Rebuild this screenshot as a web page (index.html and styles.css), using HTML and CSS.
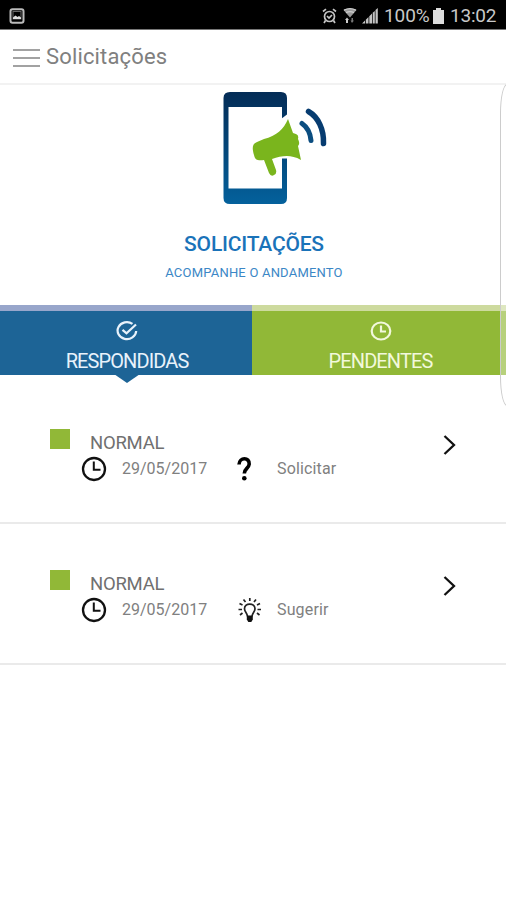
FILE: index.html
```html
<!DOCTYPE html>
<html lang="pt-BR">
<head>
  <meta charset="UTF-8">
  <title>Solicitações</title>
  <link rel="stylesheet" href="styles.css">
</head>
<body>

  <div class="status-bar">
    <svg class="status-picture" width="16" height="16" viewBox="0 0 16 16">
      <rect x="1.5" y="1.2" width="13" height="13.6" rx="2" fill="none" stroke="#bbb" stroke-width="2"/>
      <rect x="4" y="3.5" width="8" height="7.5" fill="none" stroke="#666" stroke-width="1"/>
      <path d="M4 11V9.500l2.500-2 2 1.500 1.500-1 2 1.500V11z" fill="#ddd"/>
    </svg>
    <div class="status-right">
      <svg width="15" height="16" viewBox="0 0 15 16" fill="none" stroke="#c4c4c4" stroke-width="1.700">
        <circle cx="7.500" cy="8.500" r="5"/>
        <path d="M1 3.500L4 1.200M14 3.500L11 1.200M3.500 12.500L2 15M11.500 12.500L13 15M5 8l2 2 3-3"/>
      </svg>
      <svg class="wifi" width="14" height="16" viewBox="0 0 14 16">
        <path d="M0.500 2Q7-1.500 13.500 2L7 9.500z" fill="#999"/>
        <path d="M1 2.200Q7-.8 13 2.200M3 4.700Q7 2.700 11 4.700" fill="none" stroke="#ccc" stroke-width="1.300"/>
        <path d="M4 9.500L6 12H5v3H3v-3H2z" fill="#ccc"/>
        <path d="M9 15L7.500 12.500h1V10h1.500v2.500h1z" fill="#777"/>
      </svg>
      <svg class="signal" width="16" height="16" viewBox="0 0 16 16" fill="#c4c4c4">
        <path d="M0 15.500L3 12.500V15.500zM3.800 11.700L6.500 9V15.500H3.800zM7.300 8.200L10 5.500V15.500H7.300zM10.700 4.800L12.800 3V15.500H10.700zM13.500 2L15.800 0V15.500H13.500z"/>
      </svg>
      <span class="percent">100%</span>
      <svg class="battery" width="11" height="16" viewBox="0 0 11 16" fill="#ddd">
        <path d="M3 0h5v2h3v14H0V2h3z"/>
      </svg>
      <span class="time">13:02</span>
    </div>
  </div>

  <header class="top-bar">
    <div class="menu"><i></i><i></i><i></i></div>
    <span class="top-title">Solicitações</span>
  </header>

  <section class="hero">
    <svg width="106" height="116" viewBox="0 0 106 116">
      <defs>
        <linearGradient id="phone" x1="0" y1="0" x2="0" y2="1">
          <stop offset="0" stop-color="#042c56"/>
          <stop offset="1" stop-color="#04619c"/>
        </linearGradient>
      </defs>
      <path fill="url(#phone)" fill-rule="evenodd" d="M7 2H58Q64 2 64 8V108Q64 114 58 114H7Q0.500 114 0.500 108V8Q0.500 2 7 2zM5.500 17V98.500H59V17z"/>
      <path d="M58 29L66 23V68.500H58z" fill="#fff"/>
      <path fill="#7ab51d" d="M65 29C61 39 53 46 41 49L34 52C29 54 29 58 31 65C32 70 35 71 41 70L46 83Q48 87 51 85Q54 84 53 80L49 69C59 66 67 64 78 70L75 56C77 54 76 51 75 49C76 45 74 44 70 43z"/>
      <path d="M79 33.500Q87 39 88 50.500" fill="none" stroke="#0b4d80" stroke-width="5" stroke-linecap="round"/>
      <path d="M85.500 21.500C95 27 101 39 100.500 53.500" fill="none" stroke="#073c70" stroke-width="5.500" stroke-linecap="round"/>
    </svg>
    <h1>SOLICITAÇÕES</h1>
    <p>ACOMPANHE O ANDAMENTO</p>
  </section>

  <nav class="tabs">
    <a class="tab answered">
      <svg width="22" height="22" viewBox="0 0 22 22" fill="none" stroke="#e8f2fb" stroke-width="2.200">
        <path d="M16.500 3.800A9.300 8.500 0 1 0 20.200 11M6.500 9.800l4 3.500L20 4.500"/>
      </svg>
      <span>RESPONDIDAS</span>
    </a>
    <a class="tab pending">
      <svg width="22" height="22" viewBox="0 0 22 22" fill="none" stroke="#f2f8dc" stroke-width="2.200">
        <ellipse cx="11" cy="11" rx="9.300" ry="8.500"/>
        <path d="M11 5.500V11.500H16"/>
      </svg>
      <span>PENDENTES</span>
    </a>
  </nav>

  <main class="requests">
    <article class="request">
      <div class="flag"></div>
      <div class="info">
        <h2>NORMAL</h2>
        <div class="meta">
          <svg class="clock" width="26" height="26" viewBox="0 0 26 26" fill="none" stroke="#111">
            <circle cx="13" cy="13" r="11" stroke-width="2.300"/>
            <path d="M12.800 5.500V13.800H19.500" stroke-width="2"/>
          </svg>
          <span class="date">29/05/2017</span>
          <svg class="kind" width="26" height="26" viewBox="0 0 26 26">
            <path d="M4 8.500C4.300 0.800 14.800 1 14.200 8.200C13.800 12.500 9.300 12.500 9.300 17.500" fill="none" stroke="#000" stroke-width="3.600"/>
            <circle cx="9.300" cy="22.300" r="2.300"/>
          </svg>
          <span>Solicitar</span>
        </div>
      </div>
      <svg class="arrow" width="14" height="22" viewBox="0 0 14 22" fill="none" stroke="#111" stroke-width="2.300">
        <path d="M2.500 2L12 11L2.500 20"/>
      </svg>
    </article>

    <article class="request">
      <div class="flag"></div>
      <div class="info">
        <h2>NORMAL</h2>
        <div class="meta">
          <svg class="clock" width="26" height="26" viewBox="0 0 26 26" fill="none" stroke="#111">
            <circle cx="13" cy="13" r="11" stroke-width="2.300"/>
            <path d="M12.800 5.500V13.800H19.500" stroke-width="2"/>
          </svg>
          <span class="date">29/05/2017</span>
          <svg class="kind" width="26" height="26" viewBox="0 0 26 26" fill="none" stroke="#222" stroke-width="1.700">
            <path d="M12.500 19.500C12.500 16 9.500 15 9.500 11.800C9.500 5.500 20 5.500 20 11.800C20 15 17 16 17 19.500"/>
            <path d="M11.800 18.500h6v4l-1.500 2.500h-3l-1.500-2.500z" fill="#111" stroke="none"/>
            <path d="M14.800 1V4M8.500 2.500L10.500 5M21 2.500L19 5M4.500 6.500L7.500 8M25 6.500L22 8M3.500 12.500H7M26 12.500H22.500M5 18L7.500 16M24.500 18L22 16"/>
          </svg>
          <span>Sugerir</span>
        </div>
      </div>
      <svg class="arrow" width="14" height="22" viewBox="0 0 14 22" fill="none" stroke="#111" stroke-width="2.300">
        <path d="M2.500 2L12 11L2.500 20"/>
      </svg>
    </article>
  </main>

  <!-- edge panel handle, lies over the right side of the screen -->
  <div class="edge-handle"></div>

</body>
</html>
```

FILE: styles.css
```css
body {
  margin: 0;
  background: #fff;
  font-family: Roboto, "Liberation Sans", sans-serif;
  position: relative;
  height: 900px;
  overflow: hidden;
}
svg {
  display: block;
  flex-shrink: 0;
}
/* === Status bar === */
.status-bar {
  display: flex;
  align-items: center;
  justify-content: space-between;
  box-sizing: border-box;
  height: 30px;
  padding: 2px 10px 0 9px;
  background: #000;
  border-bottom: 1px solid #777;
  color: #c8c8c8;
  font-size: 19px;
}
.status-right {
  display: flex;
  align-items: center;
}
.wifi {
  margin-left: 6px;
}
.signal {
  margin-left: 5px;
}
.percent {
  margin-left: 6px;
  width: 46px;
  letter-spacing: -0.1px;
}
.battery {
  margin-left: 3px;
}
.time {
  margin-left: 6px;
  width: 46px;
  letter-spacing: -0.2px;
}
/* === Top bar === */
.top-bar {
  display: flex;
  align-items: center;
  box-sizing: border-box;
  height: 55px;
  padding: 0 13px;
  border-bottom: 2px solid #f2f2f2;
}
.menu {
  display: grid;
  gap: 6px;
  width: 27px;
  padding-top: 3px;
}
.menu i {
  height: 2px;
  background: #a2a2a2;
}
.top-title {
  margin-left: 6px;
  color: #808080;
  font-size: 22px;
  letter-spacing: 0.15px;
}
/* === Hero === */
.hero {
  display: flex;
  flex-direction: column;
  align-items: center;
  box-sizing: border-box;
  height: 220px;
  padding: 5px 0 0 2px;
  color: #1a73b9;
}
.hero svg {
  margin-left: 44px;
}
.hero h1 {
  margin: 25px 0 0;
  font-size: 21px;
  line-height: 26px;
  font-weight: 500;
  letter-spacing: -0.2px;
}
.hero p {
  margin: 7px 0 0;
  color: #3b87c6;
  font-size: 13px;
  line-height: 18px;
  letter-spacing: 0.2px;
}
/* === Tabs === */
.tabs {
  display: grid;
  grid-template-columns: 252px 1fr;
  height: 70px;
}
.tab {
  display: flex;
  flex-direction: column;
  align-items: center;
  box-sizing: border-box;
  padding: 9px 0 0 3px;
  font-size: 20px;
  line-height: 24px;
  position: relative;
}
.tab span {
  margin-top: 7px;
  letter-spacing: -0.9px;
}
.answered {
  padding-left: 2px;
  background: #1d6496;
  border-top: 6px solid #98a6cb;
  color: #e8f2fb;
}
.answered::after {
  content: "";
  position: absolute;
  top: 63px;
  left: 114px;
  border: 13px solid transparent;
  border-top: 9px solid #1d6496;
  border-bottom: 0;
}
.pending {
  background: #91b837;
  border-top: 6px solid #cdda9e;
  color: #f2f8dc;
}
/* === Request list === */
.request {
  display: flex;
  box-sizing: border-box;
  height: 141px;
  padding: 46px 50px 0;
  border-bottom: 2px solid #eaeaea;
}
.request:first-child {
  height: 149px;
  padding-top: 54px;
}
.flag {
  width: 20px;
  height: 20px;
  background: #91b837;
}
.info {
  flex: 1;
  margin-left: 11px;
}
.info h2 {
  margin: 2px 0 0 9px;
  color: #707070;
  font-size: 18.5px;
  line-height: 24px;
  font-weight: 400;
  letter-spacing: -0.25px;
}
.meta {
  display: flex;
  align-items: center;
  margin-top: 1px;
  color: #808080;
  font-size: 16px;
  line-height: 24px;
  letter-spacing: 0.15px;
}
.date {
  margin-left: 15px;
  width: 113px;
  letter-spacing: 0;
}
.kind {
  margin-right: 16px;
}
.arrow {
  margin-top: 5px;
}
/* === Edge panel handle === */
.edge-handle {
  position: absolute;
  top: 84px;
  right: -8px;
  width: 12px;
  height: 320px;
  border: 1px solid #ccc;
  border-radius: 12px / 50px;
  background: rgba(255, 255, 255, 0.35);
}
```
